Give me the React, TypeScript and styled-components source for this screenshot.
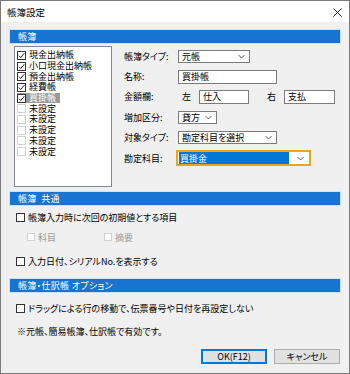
import React from "react";
import styled, { createGlobalStyle } from "styled-components";

const GlobalStyle = createGlobalStyle`
  html, body {
    margin: 0;
    padding: 0;
    background: #ffffff;
  }
  body {
    font-family: "Noto Sans CJK JP", "Noto Sans", sans-serif;
    font-size: 9px;
    color: #000;
    font-feature-settings: "palt";
  }
`;

const Window = styled.div`
  width: 350px;
  height: 374px;
  box-sizing: border-box;
  border: 1px solid #7a7a7a;
  background: #f0f0f0;
  display: flex;
  flex-direction: column;
`;

const TitleBar = styled.div`
  height: 21px;
  flex: none;
  background: #fff;
  display: flex;
  align-items: center;
  justify-content: space-between;
  padding: 1px 7px 0 6px;
  box-sizing: border-box;
  font-size: 9.5px;
`;

const Body = styled.div`
  display: flex;
  flex-direction: column;
  padding: 8px 9px 0 9px;
`;

const SectionHeader = styled.div<{ $mt?: number }>`
  height: 13px;
  margin-top: ${(p) => p.$mt ?? 0}px;
  background: #1874d1;
  box-shadow: 0 0 0 1px #cfe1f5;
  color: #fff;
  padding-left: 8px;
  display: flex;
  align-items: center;
  font-size: 9px;
  letter-spacing: 0.3px;
`;

const TopArea = styled.div`
  display: flex;
  margin-top: 3px;
  padding-left: 4px;
`;

const ListBox = styled.div`
  width: 98px;
  height: 141px;
  box-sizing: border-box;
  background: #fff;
  border: 1px solid #828790;
  padding: 3px 0 0 2px;
  display: flex;
  flex-direction: column;
  align-items: flex-start;
`;

const ListRow = styled.div<{ $selected?: boolean }>`
  height: 10.7px;
  display: flex;
  align-items: center;
  gap: 3px;
  padding-right: 4px;
  background: ${(p) => (p.$selected ? "#999999" : "transparent")};
  color: ${(p) => (p.$selected ? "#fff" : "#000")};
`;

const ListText = styled.span`
  display: inline-block;
  height: 10px;
  line-height: 10px;
  overflow: visible;
`;

const Box = styled.span<{ $tone: "dark" | "light"; $size?: number }>`
  width: ${(p) => p.$size ?? 9}px;
  height: ${(p) => p.$size ?? 9}px;
  box-sizing: border-box;
  flex: none;
  background: #fff;
  border: 1px solid ${(p) => (p.$tone === "dark" ? "#333" : "#d2d2d2")};
  display: flex;
  align-items: center;
  justify-content: center;
`;

const Form = styled.div`
  display: flex;
  flex-direction: column;
  margin-left: 12px;
`;

const FormRow = styled.div`
  height: 20.4px;
  display: flex;
  align-items: center;
`;

const Label = styled.span`
  width: 54px;
  flex: none;
`;

const SideLabel = styled.span<{ $ml: number }>`
  margin-left: ${(p) => p.$ml}px;
  width: 9px;
  margin-right: 8px;
`;

const Field = styled.div<{ $w: number; $h?: number }>`
  width: ${(p) => p.$w}px;
  height: ${(p) => p.$h ?? 14}px;
  box-sizing: border-box;
  background: #fff;
  border: 1px solid #7a7a7a;
  display: flex;
  align-items: center;
  padding: 0 4px 0 2px;
  line-height: 1;
`;

const FocusField = styled(Field)`
  border: 2px solid #eaa51b;
  padding: 0 5px 0 1px;
  margin-left: -2px;
`;

const FieldText = styled.span<{ $highlight?: boolean }>`
  flex: 1;
  height: 100%;
  display: flex;
  align-items: center;
  padding-left: 1px;
  background: ${(p) => (p.$highlight ? "#0078d7" : "transparent")};
  color: ${(p) => (p.$highlight ? "#fff" : "#000")};
  margin-right: ${(p) => (p.$highlight ? 8 : 0)}px;
`;

const OptionRow = styled.div<{ $h?: number; $mt?: number; $indent?: number }>`
  height: ${(p) => p.$h ?? 20}px;
  margin-top: ${(p) => p.$mt ?? 0}px;
  padding-left: ${(p) => p.$indent ?? 6}px;
  display: flex;
  align-items: center;
  gap: 3px;
`;

const Disabled = styled.span<{ $w?: number }>`
  color: #9a9a9a;
  width: ${(p) => (p.$w ? `${p.$w}px` : "auto")};
`;

const SubGap = styled.span`
  width: 2px;
`;

const Note = styled.div`
  margin-top: 3px;
  height: 20px;
  padding-left: 7px;
  display: flex;
  align-items: center;
`;

const ButtonBar = styled.div`
  display: flex;
  justify-content: flex-end;
  gap: 7px;
  margin-top: 8px;
`;

const Button = styled.div<{ $default?: boolean }>`
  width: 66px;
  height: 15px;
  box-sizing: border-box;
  background: #e1e1e1;
  border: 1px solid ${(p) => (p.$default ? "#0078d7" : "#adadad")};
  box-shadow: ${(p) => (p.$default ? "inset 0 0 0 1px #0078d7" : "none")};
  display: flex;
  align-items: center;
  justify-content: center;
  font-size: 9px;
`;

const Check = ({ tone = "dark", checked = false, size }: { tone?: "dark" | "light"; checked?: boolean; size?: number }) => (
  <Box $tone={tone} $size={size}>
    {checked && (
      <svg width="7" height="7" viewBox="0 0 7 7">
        <polyline points="0.8,3.6 2.7,5.5 6.3,1.2" fill="none" stroke="#222" strokeWidth="1" />
      </svg>
    )}
  </Box>
);

const Chevron = () => (
  <svg width="7" height="5" viewBox="0 0 7 5" style={{ flex: "none" }}>
    <polyline points="0.5,1 3.5,4 6.5,1" fill="none" stroke="#555" strokeWidth="0.9" />
  </svg>
);

const CloseIcon = () => (
  <svg width="9" height="9" viewBox="0 0 9 9">
    <line x1="0.5" y1="0.5" x2="8.5" y2="8.5" stroke="#222" strokeWidth="1" />
    <line x1="8.5" y1="0.5" x2="0.5" y2="8.5" stroke="#222" strokeWidth="1" />
  </svg>
);

const books = [
  { name: "現金出納帳", checked: true },
  { name: "小口現金出納帳", checked: true },
  { name: "預金出納帳", checked: true },
  { name: "経費帳", checked: true },
  { name: "買掛帳", checked: true, selected: true },
  { name: "未設定" },
  { name: "未設定" },
  { name: "未設定" },
  { name: "未設定" },
  { name: "未設定" },
];

export default function App() {
  return (
    <>
      <GlobalStyle />
      <Window>
        <TitleBar>
          <span>帳簿設定</span>
          <CloseIcon />
        </TitleBar>
        <Body>
          <SectionHeader>帳簿</SectionHeader>
          <TopArea>
            <ListBox>
              {books.map((b, i) => (
                <ListRow key={i} $selected={b.selected}>
                  <Check tone={b.checked ? "dark" : "light"} checked={b.checked} />
                  <ListText>{b.name}</ListText>
                </ListRow>
              ))}
            </ListBox>
            <Form>
              <FormRow>
                <Label>帳簿タイプ:</Label>
                <Field $w={72} $h={13}>
                  <FieldText>元帳</FieldText>
                  <Chevron />
                </Field>
              </FormRow>
              <FormRow>
                <Label>名称:</Label>
                <Field $w={99}>
                  <FieldText>買掛帳</FieldText>
                </Field>
              </FormRow>
              <FormRow>
                <Label>金額欄:</Label>
                <SideLabel $ml={4}>左</SideLabel>
                <Field $w={50}>
                  <FieldText>仕入</FieldText>
                </Field>
                <SideLabel $ml={18}>右</SideLabel>
                <Field $w={51}>
                  <FieldText>支払</FieldText>
                </Field>
              </FormRow>
              <FormRow>
                <Label>増加区分:</Label>
                <Field $w={39} $h={13}>
                  <FieldText>貸方</FieldText>
                  <Chevron />
                </Field>
              </FormRow>
              <FormRow>
                <Label>対象タイプ:</Label>
                <Field $w={99} $h={13}>
                  <FieldText>勘定科目を選択</FieldText>
                  <Chevron />
                </Field>
              </FormRow>
              <FormRow>
                <Label>勘定科目:</Label>
                <FocusField $w={135} $h={16}>
                  <FieldText $highlight>買掛金</FieldText>
                  <Chevron />
                </FocusField>
              </FormRow>
            </Form>
          </TopArea>

          <SectionHeader $mt={5}>帳簿&nbsp;&nbsp;共通</SectionHeader>
          <OptionRow $mt={2}>
            <Check />
            <span>帳簿入力時に次回の初期値とする項目</span>
          </OptionRow>
          <OptionRow $indent={17}>
            <Check tone="light" size={8} />
            <Disabled $w={58}>科目</Disabled>
            <SubGap />
            <Check tone="light" size={8} />
            <Disabled>摘要</Disabled>
          </OptionRow>
          <OptionRow $mt={4}>
            <Check />
            <span>入力日付、シリアルNo.を表示する</span>
          </OptionRow>

          <SectionHeader $mt={8}>帳簿・仕訳帳 オプション</SectionHeader>
          <OptionRow $mt={6}>
            <Check />
            <span>ドラッグによる行の移動で、伝票番号や日付を再設定しない</span>
          </OptionRow>
          <Note>※元帳、簡易帳簿、仕訳帳で有効です。</Note>
          <ButtonBar>
            <Button $default>OK(F12)</Button>
            <Button>キャンセル</Button>
          </ButtonBar>
        </Body>
      </Window>
    </>
  );
}
